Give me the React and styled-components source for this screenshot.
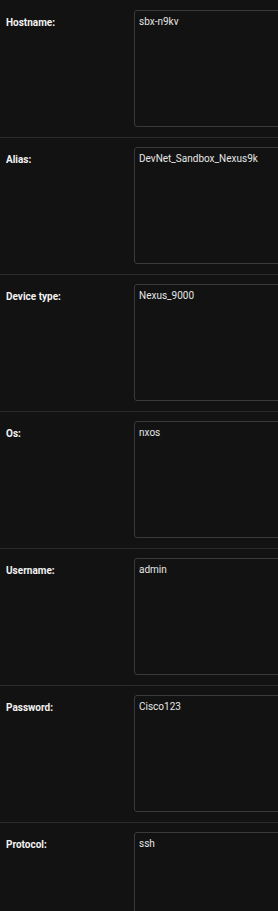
import styled, { createGlobalStyle } from "styled-components";

const Global = createGlobalStyle`
  html, body {
    margin: 0;
    padding: 0;
    background: #121212;
    overflow: hidden;
  }
  body {
    font-family: Roboto, "Liberation Sans", sans-serif;
  }
`;

const Form = styled.div`
  width: 278px;
  height: 911px;
  overflow: hidden;
  background: #121212;
`;

const Row = styled.div`
  display: grid;
  grid-template-columns: 134px 160px;
  padding: 9px 0 10px;
  border-bottom: 1px solid #2b2b2b;

  &:first-child {
    padding-top: 10px;
  }
`;

const Label = styled.label`
  padding: 7px 0 0 6px;
  font-size: 10px;
  font-weight: 700;
  color: #f2f2f2;
`;

const Field = styled.textarea`
  box-sizing: border-box;
  height: 117px;
  margin: 0;
  padding: 5px 4px;
  resize: none;
  background: #121212;
  border: 1px solid #3a3a3a;
  border-radius: 3px;
  color: #e6e6e6;
  font-family: Roboto, "Liberation Sans", sans-serif;
  font-size: 10px;
  line-height: 12px;
  outline: none;
`;

const fields = [
  { label: "Hostname:", value: "sbx-n9kv" },
  { label: "Alias:", value: "DevNet_Sandbox_Nexus9k" },
  { label: "Device type:", value: "Nexus_9000" },
  { label: "Os:", value: "nxos" },
  { label: "Username:", value: "admin" },
  { label: "Password:", value: "Cisco123" },
  { label: "Protocol:", value: "ssh" },
];

export default function App() {
  return (
    <Form>
      <Global />
      {fields.map((f) => (
        <Row key={f.label}>
          <Label>{f.label}</Label>
          <Field defaultValue={f.value} spellCheck={false} />
        </Row>
      ))}
    </Form>
  );
}
